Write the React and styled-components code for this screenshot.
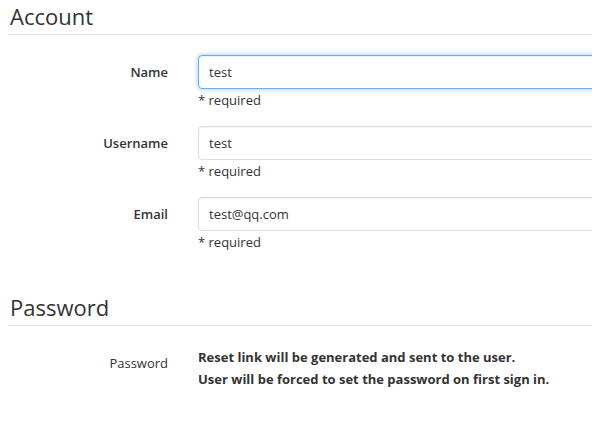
import React from "react";
import styled, { createGlobalStyle } from "styled-components";

const Global = createGlobalStyle`
  html, body { margin: 0; padding: 0; background: #fff; overflow: hidden; }
  body { font-family: "Open Sans", "Noto Sans", sans-serif; color: #333; }
`;

const Page = styled.div`
  width: 700px;
  padding: 0 0 0 8px;
`;

const Section = styled.section`
  margin-bottom: ${(p) => p.$gap || 0}px;
`;

const Heading = styled.h2`
  margin: 0;
  padding: 3px 0 5px 2px;
  font-size: 22px;
  font-weight: 400;
  line-height: 26px;
  color: #333;
  border-bottom: 1px solid #e5e5e5;
`;

const Fields = styled.div`
  padding-top: ${(p) => p.$top}px;
  display: flex;
  flex-direction: column;
  gap: 17px;
`;

const Row = styled.div`
  display: grid;
  grid-template-columns: 160px 1fr;
  column-gap: 30px;
  align-items: start;
`;

const Label = styled.label`
  text-align: right;
  font-size: 13px;
  font-weight: ${(p) => (p.$plain ? 400 : 600)};
  line-height: 18px;
  padding-top: ${(p) => p.$pt ?? 8}px;
  color: #333;
`;

const Input = styled.input`
  box-sizing: border-box;
  width: 100%;
  height: 34px;
  padding: 0 10px;
  font-family: inherit;
  font-size: 13px;
  color: #333;
  background: #fff;
  border: 1px solid ${(p) => (p.$focus ? "#66afe9" : "#dcdcdc")};
  border-radius: 4px;
  box-shadow: ${(p) =>
    p.$focus
      ? "inset 0 1px 1px rgba(0,0,0,.075), 0 0 5px rgba(102,175,233,.7)"
      : "inset 0 1px 1px rgba(0,0,0,.04)"};
  outline: none;
`;

const Help = styled.div`
  font-size: 13px;
  line-height: 18px;
  margin-top: 2px;
  color: #333;
`;

const Note = styled.div`
  font-size: 13px;
  font-weight: 700;
  line-height: 22px;
  color: #333;
`;

function Field({ label, value, focus }) {
  return (
    <Row>
      <Label>{label}</Label>
      <div>
        <Input defaultValue={value} $focus={focus} readOnly={!focus} />
        <Help>* required</Help>
      </div>
    </Row>
  );
}

export default function App() {
  return (
    <Page>
      <Global />
      <Section $gap={40}>
        <Heading>Account</Heading>
        <Fields $top={20}>
          <Field label="Name" value="test" focus />
          <Field label="Username" value="test" />
          <Field label="Email" value="test@qq.com" />
        </Fields>
      </Section>
      <Section>
        <Heading>Password</Heading>
        <Fields $top={20}>
          <Row>
            <Label $plain $pt={8}>Password</Label>
            <div>
              <Note>Reset link will be generated and sent to the user.</Note>
              <Note>User will be forced to set the password on first sign in.</Note>
            </div>
          </Row>
        </Fields>
      </Section>
    </Page>
  );
}
